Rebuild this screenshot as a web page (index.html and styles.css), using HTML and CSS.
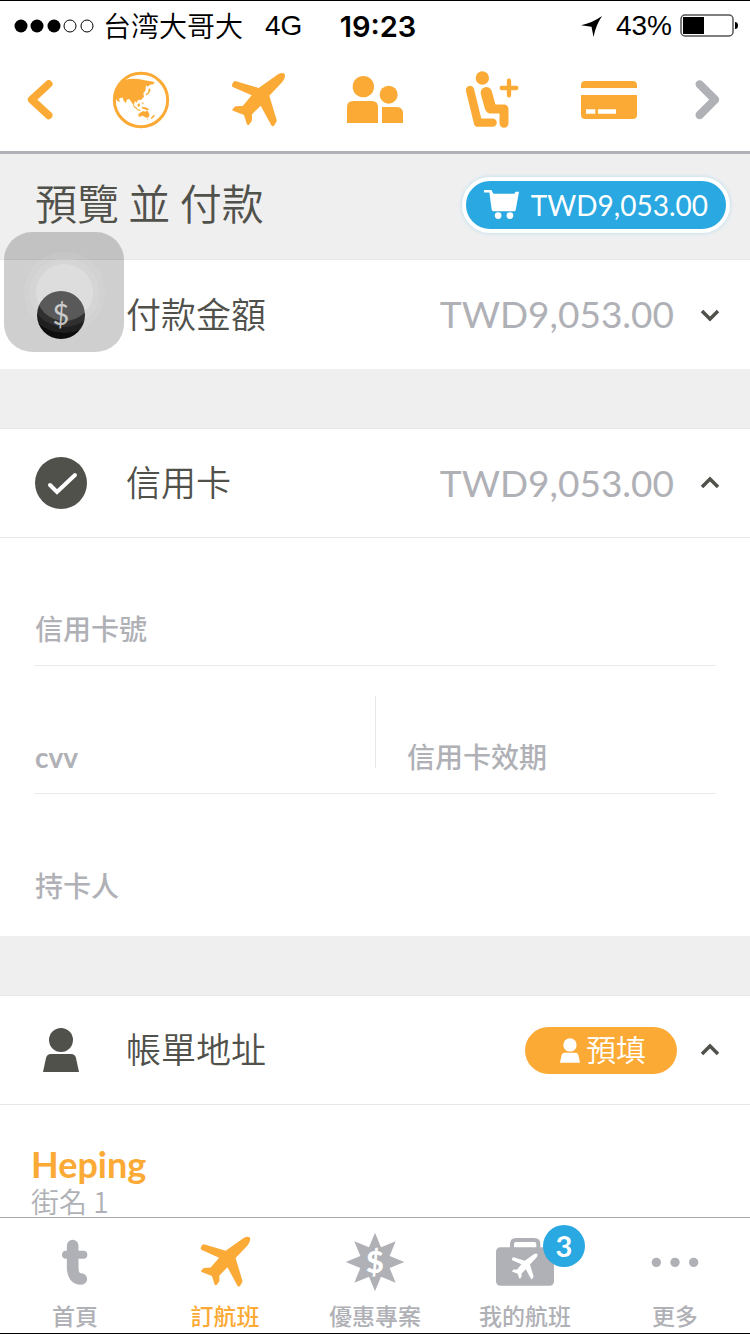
FILE: index.html
```html
<!DOCTYPE html>
<html lang="zh-Hant">
<head>
<meta charset="utf-8">
<meta name="viewport" content="width=device-width, initial-scale=1">
<title>預覽 並 付款</title>
<link rel="stylesheet" href="styles.css">
</head>
<body>
<svg class="defs" aria-hidden="true">
  <symbol id="plane" viewBox="684 210 180 180">
    <path d="M706 243L776 264L834 223Q848 215 854 222Q858 231 847 246L808 287L830 360Q831 364 827 369L822 377Q818 381 814 376L782 317L756 343L756 360Q755 365 747 374Q743 377 740 371L732 345L699 332Q695 329 699 326L706 319L728 318L755 286L698 261Q694 257 697 252Q700 243 706 243Z"/>
  </symbol>
  <symbol id="person" viewBox="0 0 36 44">
    <circle cx="18" cy="12" r="12"/>
    <path d="M8 26H28Q32 26 33 30L36 44H0L3 30Q4 26 8 26Z"/>
  </symbol>
  <symbol id="chevron" viewBox="0 0 20 14">
    <path d="M2 3L10 11L18 3" fill="none" stroke="currentColor" stroke-width="3.500"/>
  </symbol>
</svg>

<div class="app">
  <header class="header">
    <div class="status">
      <div class="status-left">
        <svg class="signal" viewBox="0 0 80 14" aria-hidden="true">
          <circle cx="7" cy="7" r="6.5"/><circle cx="23" cy="7" r="6.5"/><circle cx="40" cy="7" r="6.5"/>
          <circle class="ring" cx="56" cy="7" r="6"/><circle class="ring" cx="73" cy="7" r="6"/>
        </svg>
        <span class="carrier">台湾大哥大</span>
        <span>4G</span>
      </div>
      <strong class="clock">19:23</strong>
      <div class="status-right">
        <svg class="location" viewBox="613 46 62 62" aria-hidden="true"><path d="M613 73Q646 67 675 46Q656 75 650 108L644 78Z"/></svg>
        <span>43%</span>
        <svg class="battery" viewBox="0 0 58 24" aria-hidden="true">
          <rect x="1" y="1" width="52" height="21" rx="4" fill="none" stroke="#555" stroke-width="1.5"/>
          <rect x="3" y="3" width="21" height="17"/><path d="M55 8Q58 8 58 11.500T55 15Z"/>
        </svg>
      </div>
    </div>
    <nav class="steps" aria-label="訂票步驟">
      <button class="step" aria-label="上一步"><svg class="arrow" viewBox="63 240 120 120"><path d="M146 252L95 299L146 346" fill="none" stroke="currentColor" stroke-width="23" stroke-linecap="round" stroke-linejoin="round"/></svg></button>
      <button class="step" aria-label="航線"><svg class="icon" viewBox="333 210 180 180">
        <circle cx="423" cy="300" r="80" fill="none" stroke="currentColor" stroke-width="9"/>
        <path d="M374 240Q400 233 430 240L464 246L460 253L450 254L443 260L438 256L436 272L430 279L432 290L424 299L414 300L410 308L404 303L402 316L396 309L388 297L380 299L378 310L371 302L367 292L356 297L361 305L351 303L347 293L346 278Q352 256 374 240Z"/>
        <path d="M447 263L452 270L447 280L440 286L436 284L444 277ZM398 311L406 320L413 325L410 327L402 322ZM412 313L419 310L420 318L414 321ZM425 308L431 307L429 314ZM424 320L436 322L448 328L443 331L428 326ZM411 327L422 330L420 333L410 330ZM415 342L423 337L429 333L436 335L441 331L448 341L448 349L441 354L433 350L428 347L416 351ZM461 344L465 348L455 357L452 355ZM441 356L445 356L443 360Z"/>
      </svg></button>
      <button class="step" aria-label="航班"><svg class="icon"><use href="#plane"/></svg></button>
      <button class="step" aria-label="旅客"><svg class="icon" viewBox="1035 210 180 180">
        <circle cx="1090" cy="260" r="32"/><circle cx="1166" cy="284" r="27"/>
        <path d="M1041 369V322Q1041 303 1060 303H1116Q1134 303 1134 321V369ZM1146 369V321H1190Q1209 321 1209 341V369Z"/>
      </svg></button>
      <button class="step" aria-label="座位與加購"><svg class="icon" viewBox="261 210 180 180">
        <circle cx="322" cy="234" r="20"/>
        <g fill="none" stroke="currentColor" stroke-linecap="round" stroke-linejoin="round">
          <path d="M285 270L309 368H353" stroke-width="25"/>
          <path d="M334 278L346 322" stroke-width="34"/>
          <path d="M346 327H387V370" stroke-width="27"/>
          <path d="M402 242V286M380 264H424" stroke-width="13"/>
        </g>
      </svg></button>
      <button class="step" aria-label="付款" aria-current="step"><svg class="icon" viewBox="612 210 180 180">
        <path d="M618 264V256Q618 243 631 243H773Q786 243 786 256V264ZM618 285H786V344Q786 357 773 357H631Q618 357 618 344ZM633 328V341H661V328ZM669 328V341H723V328Z" fill-rule="evenodd"/>
      </svg></button>
      <button class="step step-next" aria-label="下一步"><svg class="arrow" viewBox="942 240 120 120"><path d="M974 253L1020 299L974 345" fill="none" stroke="currentColor" stroke-width="25" stroke-linecap="round" stroke-linejoin="round"/></svg></button>
    </nav>
  </header>

  <main class="main">
    <div class="title-bar">
      <h1 class="title">預覽 並 付款</h1>
      <button class="cart">
        <svg class="cart-icon" viewBox="160 107 104 86" aria-hidden="true">
          <path d="M160 107H182L188 118H250L254 112H264L254 167Q253 170 249 170H189Q184 170 183 166L176 114H160Z"/><circle cx="202" cy="183" r="10"/><circle cx="237" cy="183" r="10"/>
        </svg>
        <span>TWD9,053.00</span>
      </button>
    </div>

    <section class="card">
      <div class="row">
        <svg class="row-icon" viewBox="0 0 52 52" aria-hidden="true">
          <circle cx="26" cy="26" r="24" fill="#111"/><text class="coin" x="26" y="36" text-anchor="middle">$</text>
        </svg>
        <h2 class="row-title">付款金額</h2>
        <span class="amount">TWD9,053.00</span>
        <button class="toggle" aria-label="展開付款金額" aria-expanded="false"><svg class="chevron"><use href="#chevron"/></svg></button>
      </div>
    </section>

    <section class="card">
      <div class="row">
        <svg class="row-icon" viewBox="0 0 52 52" aria-hidden="true">
          <circle cx="26" cy="26" r="26"/><path d="M15 28L22 35L40 18" fill="none" stroke="#fff" stroke-width="4" stroke-linecap="round"/>
        </svg>
        <h2 class="row-title">信用卡</h2>
        <span class="amount">TWD9,053.00</span>
        <button class="toggle toggle-open" aria-label="收合信用卡" aria-expanded="true"><svg class="chevron"><use href="#chevron"/></svg></button>
      </div>
      <form class="form">
        <div class="field">
          <label for="number">信用卡號</label><input id="number" type="text" inputmode="numeric">
        </div>
        <div class="pair">
          <div class="field">
            <label for="cvv">cvv</label><input id="cvv" type="text" inputmode="numeric">
          </div>
          <div class="field field-split">
            <label for="expiry">信用卡效期</label><input id="expiry" type="text">
          </div>
        </div>
        <div class="field field-last">
          <label for="holder">持卡人</label><input id="holder" type="text">
        </div>
      </form>
    </section>

    <section class="card">
      <div class="row">
        <svg class="row-icon row-person" aria-hidden="true"><use href="#person"/></svg>
        <h2 class="row-title">帳單地址</h2>
        <button class="prefill"><svg class="prefill-icon" aria-hidden="true"><use href="#person"/></svg><span class="prefill-text">預填</span></button>
        <button class="toggle toggle-open" aria-label="收合帳單地址" aria-expanded="true"><svg class="chevron"><use href="#chevron"/></svg></button>
      </div>
      <div class="address">
        <strong class="address-value">Heping</strong>
        <span class="address-label">街名 1</span>
      </div>
    </section>
  </main>

  <nav class="tabs" aria-label="主選單">
    <a class="tab" href="#home">
      <svg class="tab-icon" viewBox="135 726 180 180" aria-hidden="true"><g fill="none" stroke="currentColor" stroke-linecap="round"><path d="M218 767V832Q218 867 244 867" stroke-width="35"/><path d="M198 794H250" stroke-width="24"/></g></svg>
      <span>首頁</span>
    </a>
    <a class="tab tab-active" href="#book" aria-current="page">
      <svg class="tab-icon tab-plane" aria-hidden="true"><use href="#plane"/></svg>
      <span>訂航班</span>
    </a>
    <a class="tab" href="#deals">
      <svg class="tab-icon" viewBox="-90 -90 180 180" aria-hidden="true">
        <path d="M0-88L18-44L62-62L44-18L88 0L44 18L62 62L18 44L0 88L-18 44L-62 62L-44 18L-88 0L-44-18L-62-62L-18-44Z"/>
        <text class="burst" x="0" y="32" text-anchor="middle">$</text>
      </svg>
      <span>優惠專案</span>
    </a>
    <a class="tab" href="#trips">
      <span class="tab-mark">
        <svg class="tab-icon" viewBox="360 726 180 180" aria-hidden="true">
          <rect x="363" y="772" width="174" height="115" rx="13"/>
          <path d="M411 775V762Q411 750 423 750H478Q490 750 490 762V775" fill="none" stroke="currentColor" stroke-width="12"/>
          <use href="#plane" x="405" y="786" width="87" height="87" fill="#fff"/>
        </svg>
        <b class="badge">3</b>
      </span>
      <span>我的航班</span>
    </a>
    <a class="tab" href="#more">
      <svg class="tab-icon" viewBox="810 726 180 180" aria-hidden="true"><circle cx="844" cy="817" r="14"/><circle cx="900" cy="817" r="14"/><circle cx="956" cy="817" r="14"/></svg>
      <span>更多</span>
    </a>
  </nav>

  <button class="assist" aria-label="輔助觸控"><span class="assist-ring"><span class="assist-ring"><span class="assist-ring assist-core"></span></span></span></button>
</div>
</body>
</html>
```

FILE: styles.css
```css
* {
  box-sizing: border-box;
}

body {
  margin: 0;
  background: #fff;
  color: #51514b;
  font-family: Lato, "Noto Sans CJK TC", sans-serif;
}

h1,
h2 {
  margin: 0;
}

button {
  display: flex;
  align-items: center;
  justify-content: center;
  margin: 0;
  padding: 0;
  border: 0;
  background: none;
  color: inherit;
  font: inherit;
}

svg {
  display: block;
  flex: none;
  fill: currentColor;
}

.defs {
  position: absolute;
  width: 0;
  height: 0;
}

.app {
  position: relative;
  display: flex;
  flex-direction: column;
  height: 100vh;
  border-top: 1px solid #000;
  border-bottom: 1px solid #000;
  overflow: hidden;
}

/* Header */

.header {
  border-bottom: 3px solid #b0b1b6;
}

.status {
  display: grid;
  grid-template-columns: 1fr auto 1fr;
  align-items: center;
  height: 50px;
  padding: 0 12px 0 14px;
  color: #000;
  font: 28px "Liberation Sans", "Noto Sans CJK SC", sans-serif;
}

.status-left,
.status-right {
  display: flex;
  align-items: center;
}

.status-right {
  justify-content: flex-end;
  gap: 8px;
}

.signal {
  width: 80px;
  height: 14px;
  margin-right: 9px;
}

.ring {
  fill: none;
  stroke: #000;
}

.carrier {
  margin-right: 22px;
  padding-bottom: 2px;
  font-family: "Noto Sans CJK SC", sans-serif;
  font-weight: 350;
  line-height: 40px;
}

.clock {
  padding-left: 4px;
  font: 600 29px Inter, sans-serif;
}

.location {
  width: 21px;
  height: 21px;
  margin-right: 6px;
}

.battery {
  width: 58px;
  height: 24px;
}

.steps {
  display: grid;
  grid-template-columns: 82px repeat(5, 1fr) 82px;
  height: 100px;
  padding-bottom: 2px;
  color: #fbaa36;
}

.step-next {
  color: #b0b1b6;
}

.icon {
  width: 60px;
  height: 60px;
}

.arrow {
  width: 40px;
  height: 40px;
}

/* Content */

.main {
  flex: 1;
  min-height: 0;
  overflow: hidden;
  background: #efefef;
}

.title-bar {
  display: flex;
  align-items: center;
  justify-content: space-between;
  height: 105px;
  padding: 0 20px 4px 35px;
}

.title {
  padding-bottom: 6px;
  font-size: 42px;
  font-weight: 350;
  font-family: "Noto Sans CJK TC", sans-serif;
  line-height: 60px;
}

.cart {
  gap: 12px;
  height: 56px;
  padding: 0 18px;
  border: 4px solid #fff;
  border-radius: 28px;
  background: #29a8e1;
  box-shadow: 0 0 4px #b4dcef;
  color: #fff;
  font-size: 28px;
}

.cart-icon {
  width: 35px;
  height: 29px;
}

.card {
  border-top: 1px solid #e7e7e7;
  background: #fff;
}

.card + .card {
  margin-top: 59px;
}

.row {
  display: flex;
  align-items: center;
  height: 109px;
  padding: 0 30px 0 35px;
}

.row:not(:last-child) {
  border-bottom: 1px solid #e7e7e7;
}

.row-icon {
  width: 52px;
  height: 52px;
  margin-right: 39px;
}

.row-person {
  height: 44px;
}

.coin {
  fill: #ddd;
  font-size: 29px;
}

.row-title {
  flex: 1;
  padding-bottom: 4px;
  font-size: 35px;
  font-weight: 350;
  font-family: "Noto Sans CJK TC", sans-serif;
  line-height: 50px;
}

.amount {
  margin-right: 26px;
  padding-bottom: 2px;
  color: #b0b1b6;
  font-size: 37px;
}

.toggle {
  width: 20px;
  height: 40px;
}

.toggle-open {
  transform: rotate(180deg);
}

.chevron {
  width: 20px;
  height: 14px;
}

/* Card form */

.form {
  padding: 0 34px 14px;
}

.field {
  display: grid;
  flex: 1;
  align-items: end;
  min-height: 128px;
  padding: 0 1px 16px;
  border-bottom: 1px solid #ebebeb;
  color: #b0b1b6;
  font-size: 28px;
}

.field label,
.field input {
  grid-area: 1 / 1;
  height: 40px;
  line-height: 40px;
}

.field label {
  font-weight: 500;
  pointer-events: none;
}

.field label[for="cvv"] {
  font-weight: 700;
}

.field input {
  width: 100%;
  padding: 0;
  border: 0;
  outline: 0;
  background: none;
  color: #51514b;
  font: inherit;
}

.field-last {
  border-bottom: 0;
}

.pair {
  display: grid;
  grid-template-columns: 1fr 1fr;
}

.field-split {
  padding-left: 32px;
  background: linear-gradient(#e7e7e7, #e7e7e7) left 30px / 1px 72px no-repeat;
}

/* Billing address */

.prefill {
  gap: 6px;
  height: 47px;
  margin-right: 23px;
  padding: 0 31px 0 35px;
  border-radius: 24px;
  background: #fbaa36;
  color: #fff;
}

.prefill-icon {
  width: 20px;
  height: 25px;
}

.prefill-text {
  padding-bottom: 4px;
  font-size: 30px;
  font-weight: 350;
  font-family: "Noto Sans CJK TC", sans-serif;
  line-height: 40px;
}

.address {
  display: flex;
  flex-direction: column;
  padding: 37px 31px;
}

.address-value {
  color: #fbaa36;
  font-size: 36px;
  line-height: 44px;
}

.address-label {
  color: #b0b1b6;
  font-family: "Noto Sans CJK TC", sans-serif;
  font-size: 28px;
  font-weight: 350;
  line-height: 30px;
}

/* Tab bar */

.tabs {
  display: grid;
  grid-template-columns: repeat(5, 1fr);
  height: 116px;
  border-top: 1px solid #a8a8a8;
  background: #fff;
}

.tab {
  display: flex;
  flex-direction: column;
  align-items: center;
  justify-content: space-between;
  padding: 14px 0 3px;
  color: #b0b1b6;
  font-size: 23px;
  font-weight: 500;
  line-height: 28px;
  text-decoration: none;
}

.tab-active {
  color: #fbaa36;
}

.tab-icon {
  width: 60px;
  height: 60px;
}

.tab-plane {
  padding: 2px;
}

.tab-mark {
  position: relative;
}

.badge {
  position: absolute;
  top: -7px;
  right: -30px;
  width: 42px;
  height: 42px;
  border-radius: 50%;
  background: #29a8e1;
  color: #fff;
  font-size: 29px;
  line-height: 42px;
  text-align: center;
}

.burst {
  fill: #fff;
  font-size: 92px;
  font-weight: 900;
}

/* Floating touch button */

.assist {
  position: absolute;
  top: 231px;
  left: 4px;
  width: 120px;
  height: 120px;
  border-radius: 28px;
  background: rgba(0, 0, 0, 0.19);
}

.assist-ring {
  display: block;
  padding: 6px;
  border-radius: 50%;
  background: rgba(255, 255, 255, 0.08);
}

.assist-core {
  width: 57px;
  height: 57px;
  background: rgba(255, 255, 255, 0.2);
}
```
